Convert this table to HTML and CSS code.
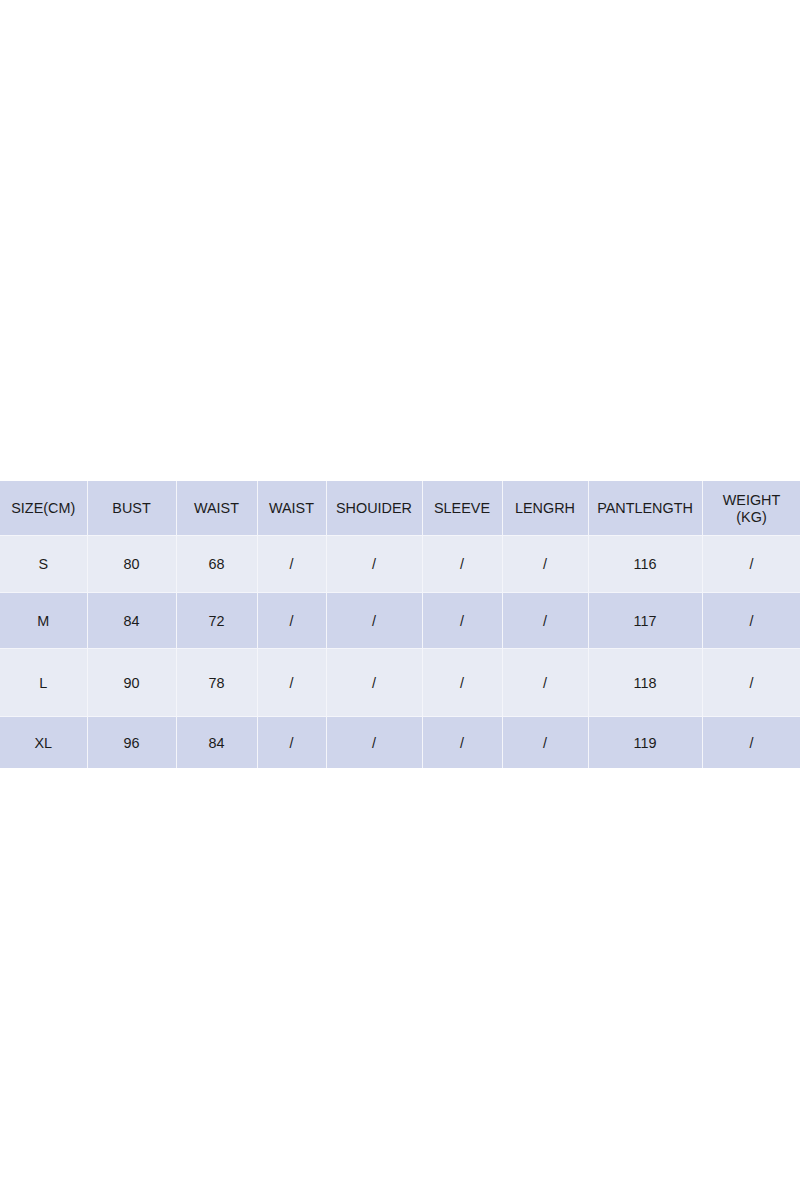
FILE: index.html
```html
<!DOCTYPE html>
<html>
<head>
<meta charset="utf-8">
<link rel="stylesheet" href="styles.css">
</head>
<body>
<div class="page">
  <table class="chart">
    <colgroup>
      <col class="c1"><col class="c2"><col class="c3"><col class="c4"><col class="c5"><col class="c6"><col class="c7"><col class="c8"><col class="c9">
    </colgroup>
    <tr class="head">
      <td>SIZE(CM)</td><td>BUST</td><td>WAIST</td><td>WAIST</td><td>SHOUIDER</td><td>SLEEVE</td><td>LENGRH</td><td>PANTLENGTH</td><td>WEIGHT<br>(KG)</td>
    </tr>
    <tr class="light r-s">
      <td>S</td><td>80</td><td>68</td><td>/</td><td>/</td><td>/</td><td>/</td><td>116</td><td>/</td>
    </tr>
    <tr class="dark r-m">
      <td>M</td><td>84</td><td>72</td><td>/</td><td>/</td><td>/</td><td>/</td><td>117</td><td>/</td>
    </tr>
    <tr class="light r-l">
      <td>L</td><td>90</td><td>78</td><td>/</td><td>/</td><td>/</td><td>/</td><td>118</td><td>/</td>
    </tr>
    <tr class="dark r-xl">
      <td>XL</td><td>96</td><td>84</td><td>/</td><td>/</td><td>/</td><td>/</td><td>119</td><td>/</td>
    </tr>
  </table>
</div>
</body>
</html>
```

FILE: styles.css
```css
html, body {
  margin: 0;
  padding: 0;
  background: #ffffff;
}
.page {
  width: 800px;
  height: 1200px;
  padding-top: 481px;
  box-sizing: border-box;
  overflow: hidden;
}
.chart {
  width: 801px;
  table-layout: fixed;
  border-collapse: collapse;
  font-family: "Liberation Sans", Arial, sans-serif;
  font-size: 14.4px;
  color: #1c1c1c;
}
.chart td {
  border: 1px solid #f4f5fa;
  text-align: center;
  vertical-align: middle;
  padding: 2px 0 0 0;
  line-height: 17px;
}
.chart tr:first-child td { border-top: none; }
.chart tr:last-child td { border-bottom: none; }
.chart td:first-child { border-left: none; }
.c1 { width: 87px; }
.c2 { width: 89px; }
.c3 { width: 81px; }
.c4 { width: 69px; }
.c5 { width: 96px; }
.c6 { width: 80px; }
.c7 { width: 86px; }
.c8 { width: 114px; }
.c9 { width: 99px; }
.head { height: 54px; background: #cfd5eb; }
.light { background: #e8ebf4; }
.dark { background: #cfd5eb; }
.r-s { height: 57px; }
.r-m { height: 56px; }
.r-l { height: 68px; }
.r-xl { height: 52px; }
```
